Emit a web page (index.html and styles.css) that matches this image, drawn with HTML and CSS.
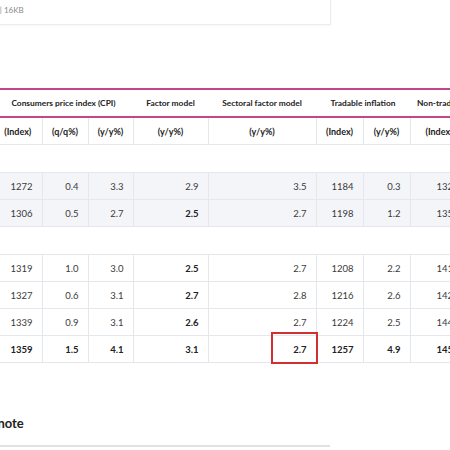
FILE: index.html
```html
<!DOCTYPE html>
<html>
<head>
<meta charset="utf-8">
<link rel="stylesheet" href="styles.css">
</head>
<body>
<div class="card"><span class="meta">XLSX | 16KB</span></div>
<div class="table-wrap">
<table class="data">
<colgroup>
<col class="c1"><col class="c2"><col class="c3"><col class="c4"><col class="c5"><col class="c6"><col class="c7"><col class="c8"><col class="c9">
</colgroup>
<thead>
<tr class="group">
<th colspan="3">Consumers price index (CPI)</th>
<th>Factor model</th>
<th>Sectoral factor model</th>
<th colspan="2">Tradable inflation</th>
<th colspan="2">Non-tradable inflation</th>
</tr>
<tr class="sub">
<th>(Index)</th><th>(q/q%)</th><th>(y/y%)</th><th>(y/y%)</th><th>(y/y%)</th><th>(Index)</th><th>(y/y%)</th><th>(Index)</th><th>(y/y%)</th>
</tr>
</thead>
<tbody>
<tr class="section"><td colspan="9"></td></tr>
<tr class="shade"><td>1272</td><td>0.4</td><td>3.3</td><td>2.9</td><td>3.5</td><td>1184</td><td>0.3</td><td>1327</td><td>2.0</td></tr>
<tr class="shade"><td>1306</td><td>0.5</td><td>2.7</td><td><b>2.5</b></td><td>2.7</td><td>1198</td><td>1.2</td><td>1359</td><td>2.4</td></tr>
<tr class="section"><td colspan="9"></td></tr>
<tr><td>1319</td><td>1.0</td><td>3.0</td><td><b>2.5</b></td><td>2.7</td><td>1208</td><td>2.2</td><td>1414</td><td>3.6</td></tr>
<tr><td>1327</td><td>0.6</td><td>3.1</td><td><b>2.7</b></td><td>2.8</td><td>1216</td><td>2.6</td><td>1424</td><td>3.4</td></tr>
<tr><td>1339</td><td>0.9</td><td>3.1</td><td><b>2.6</b></td><td>2.7</td><td>1224</td><td>2.5</td><td>1443</td><td>3.5</td></tr>
<tr class="strong"><td>1359</td><td>1.5</td><td>4.1</td><td>3.1</td><td class="mark-cell">2.7<span class="mark"></span></td><td>1257</td><td>4.9</td><td>1455</td><td>3.4</td></tr>
</tbody>
</table>
</div>
<h3 class="note">Footnote</h3>
<div class="rule"></div>
</body>
</html>
```
FILE: styles.css
```css
html, body {
  margin: 0;
  padding: 0;
  background: #fff;
  overflow: hidden;
  font-family: Lato, "Open Sans", sans-serif;
  color: #333;
}
.card {
  margin-left: -40px;
  width: 369px;
  height: 24px;
  border: 1px solid #ececec;
  border-top: none;
  box-shadow: 0 1px 2px rgba(0,0,0,0.04);
  position: relative;
}
.meta {
  position: absolute;
  left: 18px;
  top: 5px;
  font-size: 8px;
  color: #8a8a8a;
  white-space: nowrap;
}
.table-wrap {
  margin-top: 63px;
  margin-left: -6px;
  width: 560px;
}
.data {
  border-collapse: collapse;
  table-layout: fixed;
  width: 560px;
  font-size: 9.5px;
}
.c1 { width: 48px; }
.c2 { width: 46px; }
.c3 { width: 45px; }
.c4 { width: 75px; }
.c5 { width: 108px; }
.c6 { width: 47px; }
.c7 { width: 47px; }
.c8 { width: 58px; }
.c9 { width: 86px; }
.group th {
  height: 26px;
  padding: 0;
  border-top: 2px solid #c4468a;
  border-bottom: 2px solid #c4468a;
  font-weight: 700;
  font-size: 8.4px;
  color: #222;
  text-align: center;
  white-space: nowrap;
}
.group th:last-child { text-align: left; padding-left: 7px; }
.sub th {
  height: 26px;
  padding: 0;
  font-weight: 700;
  font-size: 9px;
  color: #222;
  text-align: center;
  border-left: 1px solid #e4e7eb;
  border-bottom: 1px solid #e4e7eb;
}
.sub th:first-child { border-left: none; }
.section td {
  height: 27px;
  padding: 0;
  border-bottom: 1px solid #e4e7eb;
}
tbody td {
  height: 26px;
  padding: 0 9px 0 0;
  text-align: right;
  color: #3a3a3a;
  border-left: 1px solid #e4e7eb;
  border-bottom: 1px solid #e4e7eb;
}
tbody td:first-child { border-left: none; }
tbody td b { font-weight: 700; color: #222; }
.shade td { background: #f3f5f9; }
.strong td { font-weight: 700; color: #222; }
.mark-cell { position: relative; }
.mark {
  position: absolute;
  left: 62px;
  top: -4px;
  width: 43px;
  height: 28px;
  border: 2px solid #d0302f;
}
.note {
  margin: 52px 0 0 -29px;
  font-size: 13px;
  font-weight: 700;
  color: #222;
  line-height: 16px;
}
.rule {
  margin-top: 14px;
  width: 330px;
  height: 2px;
  background: #e2e2e2;
}
```
